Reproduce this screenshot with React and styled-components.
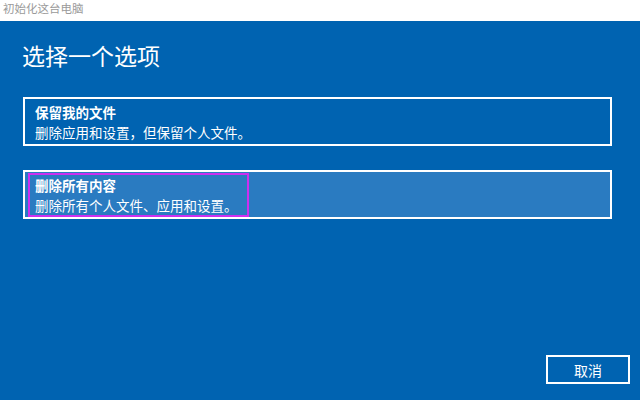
import React from "react";
import styled, { createGlobalStyle } from "styled-components";

const Global = createGlobalStyle`
  html, body { margin: 0; padding: 0; width: 640px; height: 400px; overflow: hidden; }
  body { font-family: "Noto Sans CJK SC", "Noto Sans", sans-serif; }
`;

const Window = styled.div`
  width: 640px;
  height: 400px;
  display: flex;
  flex-direction: column;
`;

const TitleBar = styled.div`
  height: 21px;
  flex: none;
  background: #ffffff;
  color: #9a9a9a;
  font-size: 11.5px;
  line-height: 17px;
  padding-left: 3px;
  box-sizing: border-box;
`;

const Main = styled.div`
  flex: 1;
  background: #0063b1;
  display: flex;
  flex-direction: column;
  padding: 18px 10px 16px 22px;
  box-sizing: border-box;
`;

const Heading = styled.h1`
  margin: 0 0 26px 0;
  font-size: 23px;
  line-height: 32px;
  font-weight: 400;
  color: #ffffff;
`;

const Options = styled.div`
  display: flex;
  flex-direction: column;
  gap: 24px;
  margin-left: 1px;
  width: 589px;
`;

const Option = styled.div`
  border: 2px solid #ffffff;
  background: ${(p) => (p.$selected ? "#2a7bc1" : "transparent")};
  padding: 1px 3px 0 3px;
  box-sizing: border-box;
  display: flex;
`;

const Focus = styled.div`
  border: 2px solid ${(p) => (p.$selected ? "#cc2ff0" : "transparent")};
  padding: 0 9px 0 5px;
  display: flex;
  flex-direction: column;
  color: #ffffff;
`;

const OptionTitle = styled.div`
  font-size: 13.5px;
  line-height: 20px;
  font-weight: 700;
`;

const OptionDesc = styled.div`
  font-size: 13.5px;
  line-height: 20px;
`;

const Footer = styled.div`
  margin-top: auto;
  display: flex;
  justify-content: flex-end;
`;

const Button = styled.button`
  width: 84px;
  height: 29px;
  border: 2px solid #ffffff;
  background: transparent;
  color: #ffffff;
  font-family: inherit;
  font-size: 14px;
  padding: 0;
`;

export default function App() {
  return (
    <>
      <Global />
      <Window>
        <TitleBar>初始化这台电脑</TitleBar>
        <Main>
          <Heading>选择一个选项</Heading>
          <Options>
            <Option>
              <Focus>
                <OptionTitle>保留我的文件</OptionTitle>
                <OptionDesc>删除应用和设置，但保留个人文件。</OptionDesc>
              </Focus>
            </Option>
            <Option $selected>
              <Focus $selected>
                <OptionTitle>删除所有内容</OptionTitle>
                <OptionDesc>删除所有个人文件、应用和设置。</OptionDesc>
              </Focus>
            </Option>
          </Options>
          <Footer>
            <Button>取消</Button>
          </Footer>
        </Main>
      </Window>
    </>
  );
}
